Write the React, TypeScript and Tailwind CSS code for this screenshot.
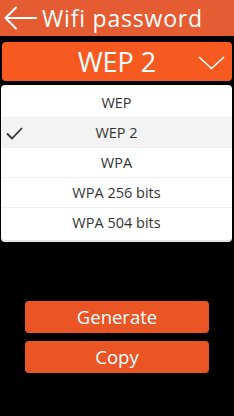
import { useState } from "react";

const options = ["WEP", "WEP 2", "WPA", "WPA 256 bits", "WPA 504 bits"];

export default function App() {
  const [selected, setSelected] = useState("WEP 2");

  return (
    <div
      className="w-[234px] h-[416px] bg-black flex flex-col overflow-hidden"
      style={{ fontFamily: '"Open Sans", "Noto Sans", sans-serif' }}
    >
      <div className="h-[36px] bg-[#e65c32] flex items-center pl-[4px] gap-[5px] shrink-0">
        <svg width="33" height="24" viewBox="0 0 33 24" fill="none">
          <path
            d="M12 1.5L1.5 12L12 22.5M1.5 12H32"
            stroke="white"
            strokeWidth="2"
            strokeLinecap="round"
            strokeLinejoin="round"
          />
        </svg>
        <span className="text-white text-[23px] leading-none tracking-[0.8px]">Wifi password</span>
      </div>

      <div className="mt-[6px] mx-[2px] h-[39px] bg-[#f65a20] rounded-[4px] flex items-center relative">
        <span className="flex-1 text-center text-white text-[27px] leading-none">{selected}</span>
        <svg
          className="absolute right-[7px] top-[14px]"
          width="27"
          height="14"
          viewBox="0 0 27 14"
          fill="none"
        >
          <path d="M1 1L13.5 12.5L26 1" stroke="white" strokeWidth="1.6" />
        </svg>
      </div>

      <div className="mt-[4px] mx-[1px] mr-[2px] bg-white rounded-[4px] shadow-[0_2px_0_#e5e5e5] pt-[3px] pb-[2px] flex flex-col">
        {options.map((o) => (
          <button
            key={o}
            onClick={() => setSelected(o)}
            className={`h-[30px] relative flex items-center justify-center text-[14.5px] text-[#333] border-b border-[#f0f0f0] last:border-b-0 ${
              o === selected ? "bg-[#f3f3f3]" : "bg-white"
            }`}
          >
            {o === selected && (
              <svg
                className="absolute left-[5px] top-[9px]"
                width="17"
                height="13"
                viewBox="0 0 17 13"
                fill="none"
              >
                <path d="M1 6.5L6 11.5L16 1" stroke="#333" strokeWidth="1.8" />
              </svg>
            )}
            {o}
          </button>
        ))}
      </div>

      <div className="mt-[61px] px-[25px] flex flex-col gap-[8px]">
        <button className="h-[32px] bg-[#ea5526] rounded-[4px] text-white text-[18.5px] leading-none">
          Generate
        </button>
        <button className="h-[32px] bg-[#ea5526] rounded-[4px] text-white text-[18.5px] leading-none">
          Copy
        </button>
      </div>
    </div>
  );
}
